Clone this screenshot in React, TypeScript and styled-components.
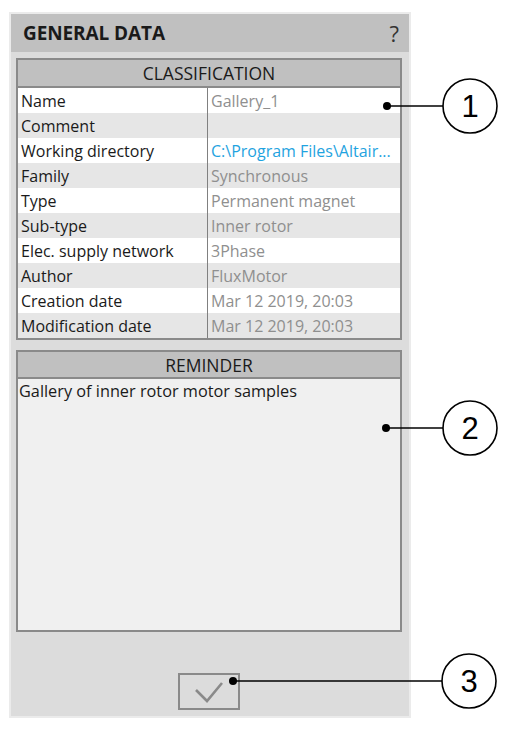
import React from "react";
import styled, { createGlobalStyle } from "styled-components";

const Global = createGlobalStyle`
  html, body { margin: 0; padding: 0; background: #ffffff; }
  body { font-family: "Open Sans", "Noto Sans", sans-serif; }
  * { box-sizing: border-box; }
`;

const Page = styled.div`
  position: relative;
  width: 507px;
  height: 729px;
  padding: 12px 0 0 9px;
  background: #ffffff;
  overflow: hidden;
`;

const Panel = styled.div`
  width: 402px;
  height: 706px;
  border: 2px solid #ebebeb;
  background: #dcdcdc;
  display: flex;
  flex-direction: column;
`;

const Header = styled.div`
  height: 38px;
  flex: none;
  background: #c0c0c0;
  display: flex;
  align-items: center;
  justify-content: space-between;
  padding: 0 10px 0 12px;
`;

const Title = styled.div`
  font-size: 19px;
  font-weight: 700;
  color: #1a1a1a;
  letter-spacing: -0.1px;
`;

const Help = styled.div`
  font-size: 22px;
  color: #333333;
  line-height: 1;
`;

const Body = styled.div`
  flex: 1;
  display: flex;
  flex-direction: column;
  padding: 6px 7px 6px 5px;
`;

const Section = styled.div<{ $height?: number; $gap?: number }>`
  border: 2px solid #8a8a8a;
  display: flex;
  flex-direction: column;
  margin-top: ${(p) => p.$gap ?? 0}px;
  ${(p) => (p.$height ? `height: ${p.$height}px;` : "")}
  flex: none;
`;

const SectionHeader = styled.div<{ $h: number }>`
  height: ${(p) => p.$h}px;
  background: #c0c0c0;
  border-bottom: 2px solid #8a8a8a;
  display: flex;
  align-items: center;
  justify-content: center;
  font-size: 17.5px;
  color: #1a1a1a;
  flex: none;
`;

const Row = styled.div<{ $alt: boolean }>`
  display: grid;
  grid-template-columns: 190px 1fr;
  height: 25px;
  background: ${(p) => (p.$alt ? "#e6e6e6" : "#ffffff")};
  font-size: 16px;
`;

const Label = styled.div`
  padding-left: 3px;
  color: #1a1a1a;
  display: flex;
  align-items: center;
  border-right: 1px solid #808080;
  white-space: nowrap;
`;

const Value = styled.div<{ $link?: boolean }>`
  padding-left: 3px;
  color: ${(p) => (p.$link ? "#1fa3e0" : "#8f8f8f")};
  display: flex;
  align-items: center;
  white-space: nowrap;
  overflow: hidden;
`;

const ReminderText = styled.div`
  flex: 1;
  background: #f0f0f0;
  padding: 1px 1px;
  font-size: 16.3px;
  color: #1a1a1a;
`;

const Footer = styled.div`
  flex: 1;
  display: flex;
  align-items: flex-end;
  justify-content: center;
`;

const CheckButton = styled.button`
  width: 62px;
  height: 37px;
  border: 2px solid #8a8a8a;
  background: transparent;
  padding: 0;
  display: flex;
  align-items: center;
  justify-content: center;
`;

const Callouts = styled.svg`
  position: absolute;
  left: 0;
  top: 0;
  width: 507px;
  height: 729px;
  pointer-events: none;
`;

const rows: { label: string; value: string; link?: boolean }[] = [
  { label: "Name", value: "Gallery_1" },
  { label: "Comment", value: "" },
  { label: "Working directory", value: "C:\\Program Files\\Altair...", link: true },
  { label: "Family", value: "Synchronous" },
  { label: "Type", value: "Permanent magnet" },
  { label: "Sub-type", value: "Inner rotor" },
  { label: "Elec. supply network", value: "3Phase" },
  { label: "Author", value: "FluxMotor" },
  { label: "Creation date", value: "Mar 12 2019, 20:03" },
  { label: "Modification date", value: "Mar 12 2019, 20:03" },
];

const callouts = [
  { n: "1", dx: 387, dy: 106, cx: 470, cy: 106 },
  { n: "2", dx: 386, dy: 428, cx: 470, cy: 428 },
  { n: "3", dx: 233, dy: 681, cx: 469, cy: 681 },
];

export default function App() {
  return (
    <Page>
      <Global />
      <Panel>
        <Header>
          <Title>GENERAL DATA</Title>
          <Help>?</Help>
        </Header>
        <Body>
          <Section>
            <SectionHeader $h={28}>CLASSIFICATION</SectionHeader>
            {rows.map((r, i) => (
              <Row key={r.label} $alt={i % 2 === 1}>
                <Label>{r.label}</Label>
                <Value $link={r.link}>{r.value}</Value>
              </Row>
            ))}
          </Section>
          <Section $height={282} $gap={10}>
            <SectionHeader $h={27}>REMINDER</SectionHeader>
            <ReminderText>Gallery of inner rotor motor samples</ReminderText>
          </Section>
          <Footer>
            <CheckButton aria-label="OK">
              <svg width="30" height="22" viewBox="0 0 30 22">
                <polyline
                  points="2,9 13,20 28,2"
                  fill="none"
                  stroke="#8a8a8a"
                  strokeWidth="2.6"
                />
              </svg>
            </CheckButton>
          </Footer>
        </Body>
      </Panel>
      <Callouts viewBox="0 0 507 729">
        {callouts.map((c) => (
          <g key={c.n}>
            <line x1={c.dx} y1={c.dy} x2={c.cx - 27} y2={c.cy} stroke="#000" strokeWidth="1.5" />
            <circle cx={c.dx} cy={c.dy} r="4" fill="#000" />
            <circle cx={c.cx} cy={c.cy} r="27" fill="#fff" stroke="#000" strokeWidth="1.6" />
            <text
              x={c.cx}
              y={c.cy + 11}
              textAnchor="middle"
              fontFamily="Liberation Sans, Arial, sans-serif"
              fontSize="31"
              fill="#000"
            >
              {c.n}
            </text>
          </g>
        ))}
      </Callouts>
    </Page>
  );
}
